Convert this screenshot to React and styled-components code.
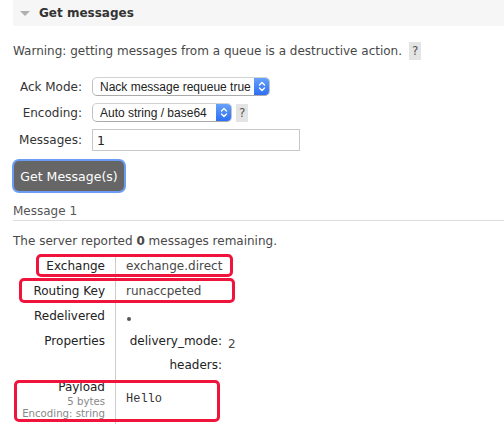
import React from 'react';
import styled, { createGlobalStyle } from 'styled-components';

const GlobalStyle = createGlobalStyle`
  html, body {
    margin: 0;
    padding: 0;
    background: #fff;
  }
  body {
    font-family: "DejaVu Sans", Verdana, sans-serif;
    font-size: 12px;
    color: #484848;
  }
`;

const Page = styled.div`
  padding-left: 13px;
  width: 491px;
  overflow: hidden;
`;

const SectionHeader = styled.div`
  height: 26px;
  background: #f6f6f6;
  display: flex;
  align-items: center;
  padding-left: 7px;
  gap: 9px;
  font-weight: bold;
  color: #333;
`;

const Triangle = styled.span`
  width: 0;
  height: 0;
  border-left: 5px solid transparent;
  border-right: 5px solid transparent;
  border-top: 5px solid #b0b0b0;
  margin-top: 1px;
`;

const Warning = styled.p`
  margin: 16px 0 0;
  line-height: 18px;
`;

const Help = styled.span`
  display: inline-block;
  background: #e4e4e4;
  color: #555;
  padding: 0 3px;
  line-height: 18px;
  margin-left: ${(p) => p.$gap || 4}px;
`;

const Form = styled.div`
  display: grid;
  grid-template-columns: 69px auto;
  column-gap: 10px;
  row-gap: 7px;
  align-items: center;
  margin-top: 17px;
`;

const Label = styled.label`
  text-align: right;
  color: #333;
`;

const Field = styled.div`
  display: flex;
  align-items: center;
`;

const Select = styled.div`
  width: ${(p) => p.$width}px;
  height: 19px;
  box-sizing: border-box;
  border: 1px solid #c2c2c2;
  border-top-color: #d2d2d2;
  border-bottom-color: #aaa;
  border-radius: 5px;
  background: #fff;
  display: flex;
  align-items: center;
  font-family: "Liberation Sans", Arial, sans-serif;
  font-size: 12px;
  color: #222;
  padding-left: 7px;
  overflow: hidden;
`;

const SelectText = styled.span`
  flex: 1;
  white-space: nowrap;
`;

const Stepper = styled.span`
  width: 16px;
  align-self: stretch;
  margin: -1px -1px -1px 0;
  border-radius: 0 5px 5px 0;
  background: linear-gradient(#6aa4fb, #2a6cf2);
  display: flex;
  align-items: center;
  justify-content: center;
`;

const Input = styled.div`
  width: 208px;
  height: 22px;
  box-sizing: border-box;
  border: 1px solid #c8c8c8;
  padding-left: 4px;
  display: flex;
  align-items: center;
  color: #222;
  font-size: 12.5px;
`;

const Button = styled.button`
  margin: 10px 0 0 1px;
  width: 110px;
  height: 30px;
  border: none;
  border-radius: 5px;
  background: #666;
  color: #fff;
  font-family: inherit;
  font-size: 12.5px;
  box-shadow: 0 0 0 2px #6b9cf4;
  display: block;
`;

const MessageTitle = styled.div`
  margin-top: 11px;
  line-height: 18px;
  color: #555;
  border-bottom: 1px solid #ddd;
`;

const ServerText = styled.p`
  margin: 11px 0 0;
  line-height: 18px;
`;

const Details = styled.div`
  position: relative;
  margin-top: 4px;
  display: grid;
  grid-template-columns: 103px 1fr;
`;

const Key = styled.div`
  text-align: right;
  padding: ${(p) => p.$pad || '4px'} 10px 4px 0;
  border-right: 1px solid #ccc;
  line-height: 17px;
  color: #222;
`;

const Value = styled.div`
  padding: ${(p) => p.$pad || '4px'} 0 4px 10px;
  line-height: 17px;
  color: #484848;
`;

const Sub = styled.div`
  font-size: 10.2px;
  line-height: 12px;
  color: #888;
`;

const Dot = styled.span`
  display: inline-block;
  width: 4px;
  height: 4px;
  border-radius: 50%;
  background: #555;
  margin-left: 1px;
  vertical-align: -1px;
`;

const Props = styled.div`
  display: grid;
  grid-template-columns: 96px auto;
  column-gap: 6px;
  row-gap: 4px;
  justify-content: start;
`;

const PropKey = styled.span`
  text-align: right;
  color: #222;
`;

const PropVal = styled.span`
  padding-top: 3px;
`;

const Mono = styled.span`
  font-family: "Liberation Mono", "Courier New", monospace;
  font-size: 12px;
  color: #333;
`;

const Highlight = styled.div`
  position: absolute;
  left: ${(p) => p.$x}px;
  top: ${(p) => p.$y}px;
  width: ${(p) => p.$w}px;
  height: ${(p) => p.$h}px;
  box-sizing: border-box;
  border: 3px solid #f0143d;
  border-radius: 5px;
  pointer-events: none;
`;

const Chevrons = () => (
  <svg width="8" height="11" viewBox="0 0 8 11">
    <path d="M1.5 4 L4 1.5 L6.5 4 M1.5 7 L4 9.5 L6.5 7" fill="none" stroke="#fff" strokeWidth="1.4" strokeLinecap="round" strokeLinejoin="round" />
  </svg>
);

export default function App() {
  return (
    <Page>
      <GlobalStyle />
      <SectionHeader>
        <Triangle />
        Get messages
      </SectionHeader>

      <Warning>
        Warning: getting messages from a queue is a destructive action.
        <Help $gap={7}>?</Help>
      </Warning>

      <Form>
        <Label>Ack Mode:</Label>
        <Field>
          <Select $width={178}>
            <SelectText>Nack message requeue true</SelectText>
            <Stepper><Chevrons /></Stepper>
          </Select>
        </Field>
        <Label>Encoding:</Label>
        <Field>
          <Select $width={140}>
            <SelectText>Auto string / base64</SelectText>
            <Stepper><Chevrons /></Stepper>
          </Select>
          <Help $gap={4}>?</Help>
        </Field>
        <Label>Messages:</Label>
        <Field>
          <Input>1</Input>
        </Field>
      </Form>

      <Button>Get Message(s)</Button>

      <MessageTitle>Message 1</MessageTitle>
      <ServerText>
        The server reported <b>0</b> messages remaining.
      </ServerText>

      <Details>
        <Key>Exchange</Key>
        <Value>exchange.direct</Value>
        <Key>Routing Key</Key>
        <Value>runaccpeted</Value>
        <Key>Redelivered</Key>
        <Value><Dot /></Value>
        <Key>Properties</Key>
        <Value>
          <Props>
            <PropKey>delivery_mode:</PropKey>
            <PropVal>2</PropVal>
            <PropKey>headers:</PropKey>
            <PropVal />
          </Props>
        </Value>
        <Key $pad="1px">
          Payload
          <Sub>5 bytes</Sub>
          <Sub>Encoding: string</Sub>
        </Key>
        <Value $pad="12px"><Mono>Hello</Mono></Value>

        <Highlight $x={23} $y={0} $w={197} $h={23} />
        <Highlight $x={6} $y={24} $w={216} $h={25} />
        <Highlight $x={1} $y={126} $w={206} $h={42} />
      </Details>
    </Page>
  );
}
